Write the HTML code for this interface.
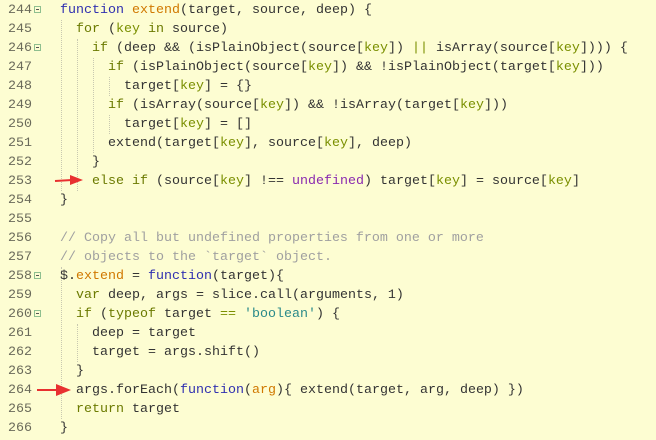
<!DOCTYPE html><html><head><style>
body{margin:0;width:656px;height:440px;background:#fdfdd2;overflow:hidden;font-family:"Liberation Mono",monospace;font-size:13.33px;color:#333}
.r{position:absolute;left:0;height:19px;line-height:19px;white-space:pre}
.n{position:absolute;left:0;width:32px;text-align:right;color:#6a6a5a}
.c{position:absolute;left:60px}
.f{position:absolute;left:34px;top:5px;width:7px;height:7px;border:1px solid #8fbf8f;box-sizing:border-box}
.f:after{content:"";position:absolute;left:1px;top:2px;width:3px;height:1px;background:#555}
.g{position:absolute;width:0;border-left:1px dotted #c8c8b0}
.k{color:#6b7a00}.fn{color:#3030b0}.o{color:#d07800}.y{color:#7a8f00}.s{color:#2a8a8a}.u{color:#8a2ab0}.cm{color:#a0a0a0}
</style></head><body>
<div class="g" style="left:61px;top:20px;height:171px"></div>
<div class="g" style="left:77px;top:39px;height:152px"></div>
<div class="g" style="left:93px;top:58px;height:95px"></div>
<div class="g" style="left:109px;top:77px;height:19px"></div>
<div class="g" style="left:109px;top:115px;height:19px"></div>
<div class="g" style="left:61px;top:267px;height:152px"></div>
<div class="g" style="left:77px;top:324px;height:38px"></div>
<div class="r" style="top:1px"><span class="n">244</span><span class="f"></span><span class="c"><span class="fn">function</span> <span class="o">extend</span>(target, source, deep) {</span></div>
<div class="r" style="top:20px"><span class="n">245</span><span class="c">  <span class="k">for</span> (<span class="y">key</span> <span class="k">in</span> source)</span></div>
<div class="r" style="top:39px"><span class="n">246</span><span class="f"></span><span class="c">    <span class="k">if</span> (deep &amp;&amp; (isPlainObject(source[<span class="y">key</span>]) <span class="y">||</span> isArray(source[<span class="y">key</span>]))) {</span></div>
<div class="r" style="top:58px"><span class="n">247</span><span class="c">      <span class="k">if</span> (isPlainObject(source[<span class="y">key</span>]) &amp;&amp; !isPlainObject(target[<span class="y">key</span>]))</span></div>
<div class="r" style="top:77px"><span class="n">248</span><span class="c">        target[<span class="y">key</span>] = {}</span></div>
<div class="r" style="top:96px"><span class="n">249</span><span class="c">      <span class="k">if</span> (isArray(source[<span class="y">key</span>]) &amp;&amp; !isArray(target[<span class="y">key</span>]))</span></div>
<div class="r" style="top:115px"><span class="n">250</span><span class="c">        target[<span class="y">key</span>] = []</span></div>
<div class="r" style="top:134px"><span class="n">251</span><span class="c">      extend(target[<span class="y">key</span>], source[<span class="y">key</span>], deep)</span></div>
<div class="r" style="top:153px"><span class="n">252</span><span class="c">    }</span></div>
<div class="r" style="top:172px"><span class="n">253</span><span class="c">    <span class="k">else</span> <span class="k">if</span> (source[<span class="y">key</span>] !== <span class="u">undefined</span>) target[<span class="y">key</span>] = source[<span class="y">key</span>]</span></div>
<div class="r" style="top:191px"><span class="n">254</span><span class="c">}</span></div>
<div class="r" style="top:210px"><span class="n">255</span></div>
<div class="r" style="top:229px"><span class="n">256</span><span class="c cm">// Copy all but undefined properties from one or more</span></div>
<div class="r" style="top:248px"><span class="n">257</span><span class="c cm">// objects to the `target` object.</span></div>
<div class="r" style="top:267px"><span class="n">258</span><span class="f"></span><span class="c">$.<span class="o">extend</span> = <span class="fn">function</span>(target){</span></div>
<div class="r" style="top:286px"><span class="n">259</span><span class="c">  <span class="k">var</span> deep, args = slice.call(arguments, 1)</span></div>
<div class="r" style="top:305px"><span class="n">260</span><span class="f"></span><span class="c">  <span class="k">if</span> (<span class="k">typeof</span> target <span class="y">==</span> <span class="s">'boolean'</span>) {</span></div>
<div class="r" style="top:324px"><span class="n">261</span><span class="c">    deep = target</span></div>
<div class="r" style="top:343px"><span class="n">262</span><span class="c">    target = args.shift()</span></div>
<div class="r" style="top:362px"><span class="n">263</span><span class="c">  }</span></div>
<div class="r" style="top:381px"><span class="n">264</span><span class="c">  args.forEach(<span class="fn">function</span>(<span class="o">arg</span>){ extend(target, arg, deep) })</span></div>
<div class="r" style="top:400px"><span class="n">265</span><span class="c">  <span class="k">return</span> target</span></div>
<div class="r" style="top:419px"><span class="n">266</span><span class="c">}</span></div>
<svg style="position:absolute;left:0;top:0" width="656" height="440">
<path d="M55 181 L72 180" stroke="#e83030" stroke-width="2"/><path d="M70 175 L83 180 L70 185 Z" fill="#e83030"/>
<path d="M37 390 L58 390" stroke="#e83030" stroke-width="2"/><path d="M56 384 L71 390 L56 396 Z" fill="#e83030"/>
</svg>
</body></html>
